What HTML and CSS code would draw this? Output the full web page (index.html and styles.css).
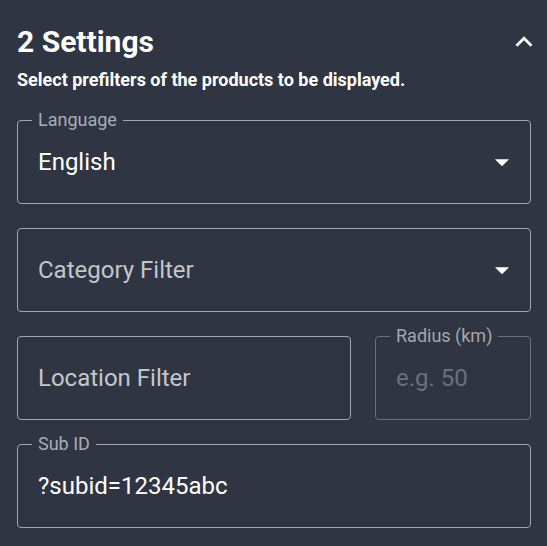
FILE: index.html
```html
<!DOCTYPE html>
<html lang="en">
<head>
<meta charset="utf-8">
<title>Settings</title>
<link rel="stylesheet" href="styles.css">
</head>
<body>
<section class="panel">
  <header class="head">
    <h2 class="title">2 Settings</h2>
    <svg class="chev" viewBox="0 0 24 24" aria-hidden="true"><path d="M12 8l-6 6 1.41 1.41L12 10.83l4.59 4.58L18 14z"/></svg>
  </header>
  <p class="sub">Select prefilters of the products to be displayed.</p>

  <fieldset class="field">
    <legend class="lbl">Language</legend>
    <div class="row"><span class="val">English</span><svg class="drop" viewBox="0 0 24 24" aria-hidden="true"><path d="M7 10l5 5 5-5z"/></svg></div>
  </fieldset>

  <fieldset class="field">
    <legend class="lbl empty"></legend>
    <div class="row"><span class="val ph">Category Filter</span><svg class="drop" viewBox="0 0 24 24" aria-hidden="true"><path d="M7 10l5 5 5-5z"/></svg></div>
  </fieldset>

  <div class="pair">
    <fieldset class="field">
      <legend class="lbl empty"></legend>
      <div class="row"><span class="val ph">Location Filter</span></div>
    </fieldset>
    <fieldset class="field dim">
      <legend class="lbl">Radius (km)</legend>
      <div class="row"><span class="val ph2">e.g. 50</span></div>
    </fieldset>
  </div>

  <fieldset class="field">
    <legend class="lbl">Sub ID</legend>
    <div class="row"><span class="val">?subid=12345abc</span></div>
  </fieldset>
</section>
</body>
</html>
```

FILE: styles.css
```css
html, body {
  margin: 0;
  padding: 0;
  background: #2f3542;
}
body {
  font-family: Roboto, "Noto Sans", sans-serif;
  color: #ffffff;
}
.panel {
  padding: 24px 16px 0 17px;
  display: flex;
  flex-direction: column;
}
.head {
  display: flex;
  align-items: center;
  justify-content: space-between;
  height: 36px;
}
.title {
  margin: 0;
  font-size: 30px;
  line-height: 36px;
  font-weight: 700;
  color: #ffffff;
}
.chev {
  width: 34px;
  height: 34px;
  fill: #ffffff;
  margin-right: -10px;
}
.sub {
  margin: 9px 0 19px;
  font-size: 18px;
  line-height: 22px;
  font-weight: 700;
  color: #ffffff;
}
.field {
  margin: 0 0 14px;
  padding: 0 11px 0 14px;
  border: 1px solid #a2a6ad;
  border-radius: 4px;
  min-width: 0;
}
.lbl {
  padding: 0 6px;
  font-size: 18px;
  line-height: 20px;
  height: 20px;
  color: #a9adb4;
}
.lbl.empty {
  padding: 0;
  width: 0;
}
.row {
  display: flex;
  align-items: center;
  justify-content: space-between;
  height: 34px;
  padding: 15px 0 24px 6px;
}
.val {
  font-size: 24px;
  line-height: 34px;
  color: #ffffff;
  white-space: nowrap;
}
.val.ph {
  color: #c3c6cb;
}
.val.ph2 {
  color: #6b717c;
}
.drop {
  width: 34px;
  height: 34px;
  fill: #ffffff;
  flex: none;
}
.pair {
  display: grid;
  grid-template-columns: 1fr 156px;
  column-gap: 24px;
}
.field.dim {
  border-color: #6b717b;
}
.field.dim .lbl {
  color: #a3a7ae;
}
```
